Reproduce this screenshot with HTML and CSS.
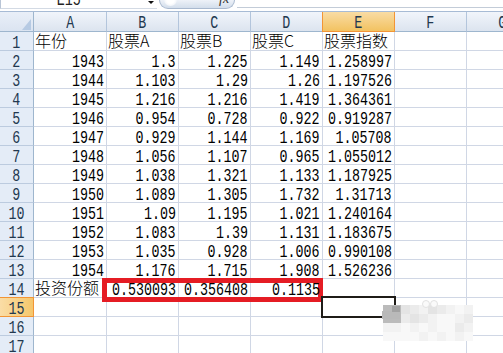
FILE: index.html
```html
<!DOCTYPE html>
<html lang="zh-CN">
<head>
  <meta charset="UTF-8">
  <title>投资份额</title>
  <link rel="stylesheet" href="styles.css">
</head>
<body>

  <div class="barra">
    <div class="nombre"><span>E15</span></div>
    <div class="desplegable"><i class="flecha"></i></div>
    <div class="boton-fx"><i class="brillo"></i><span class="fx">fx</span></div>
    <div class="formula"></div>
  </div>

  <div class="hoja" id="hoja">
    <div class="marco-rojo"></div>
    <div class="seleccion"></div>
    <div class="marca" id="marca"></div>
    <div class="gris claro"></div>
    <div class="gris oscuro"></div>
    <div class="lazo"><i></i><i></i></div>
  </div>

  <script>
    // --- Datos de la hoja ---
    const columnas = ['A', 'B', 'C', 'D', 'E', 'F', 'G'];
    const filas = [
      ['年份', '股票A', '股票B', '股票C', '股票指数'],
      ['1943', '1.3', '1.225', '1.149', '1.258997'],
      ['1944', '1.103', '1.29', '1.26', '1.197526'],
      ['1945', '1.216', '1.216', '1.419', '1.364361'],
      ['1946', '0.954', '0.728', '0.922', '0.919287'],
      ['1947', '0.929', '1.144', '1.169', '1.05708'],
      ['1948', '1.056', '1.107', '0.965', '1.055012'],
      ['1949', '1.038', '1.321', '1.133', '1.187925'],
      ['1950', '1.089', '1.305', '1.732', '1.31713'],
      ['1951', '1.09', '1.195', '1.021', '1.240164'],
      ['1952', '1.083', '1.39', '1.131', '1.183675'],
      ['1953', '1.035', '0.928', '1.006', '0.990108'],
      ['1954', '1.176', '1.715', '1.908', '1.526236'],
      ['投资份额', '0.530093', '0.356408', '0.1135']
    ];
    const hoja = document.getElementById('hoja');

    function celda(clase, texto) {
      const d = document.createElement('div');
      d.className = clase;
      if (texto) {
        const s = document.createElement('span');
        s.textContent = texto;
        d.appendChild(s);
      }
      hoja.appendChild(d);
    }

    celda('esquina');
    columnas.forEach(c => celda('cabecera' + (c === 'E' ? ' activa' : ''), c));

    for (let i = 1; i <= 17; i++) {
      celda('numero' + (i === 15 ? ' activa' : ''), String(i));
      const datos = filas[i - 1] || [];
      columnas.forEach((c, j) => {
        const v = datos[j];
        if (v === undefined) celda('celda');
        else if (/^[\d.]+$/.test(v)) celda('celda num', v);
        else celda('celda texto', v);
      });
    }

    // --- Mosaico de la marca de agua ---
    const patron = [
      '0012312343',
      '0021234432',
      '3343434423',
      '4444343434'
    ];
    const marca = document.getElementById('marca');
    patron.join('').split('').forEach(t => {
      const p = document.createElement('i');
      p.className = 't' + t;
      marca.appendChild(p);
    });
  </script>

</body>
</html>
```

FILE: styles.css
```css
* {
  box-sizing: border-box;
}
html, body {
  margin: 0;
  overflow: hidden;
  background-color: #fff;
}
body {
  width: 503px;
  height: 353px;
  font-family: "Noto Sans CJK SC", sans-serif;
}

/* barra de fórmulas (cortada arriba) */
.barra {
  display: flex;
  height: 12px;
  border-bottom: 1px solid #a7bbd5;
  overflow: hidden;
}
.nombre {
  width: 144px;
  height: 9px;
  display: flex;
  justify-content: center;
  padding-right: 8px;
  border-left: 1px solid #b9c5d6;
  border-bottom: 1px solid #d3dae4;
  line-height: 13px;
  color: #222;
}
.nombre span {
  margin-top: -6px;
}
.desplegable {
  width: 13px;
  height: 9px;
  display: flex;
  justify-content: center;
  border-bottom: 1px solid #d3dae4;
}
.flecha {
  margin-top: 1px;
  width: 0;
  height: 0;
  border-left: 3px solid transparent;
  border-right: 3px solid transparent;
  border-top: 3px solid #111;
}
.boton-fx {
  position: relative;
  width: 76px;
  height: 9px;
  margin-left: 2px;
  border: 1px solid #a9b9cf;
  border-top: none;
  border-radius: 0 0 9px 9px;
  background: linear-gradient(#eef2f8, #d3deeb);
}
.brillo {
  position: absolute;
  left: 4px;
  top: -6px;
  width: 13px;
  height: 12px;
  border-radius: 50%;
  background: radial-gradient(#fff 40%, #e3e9f2);
}
.fx {
  position: absolute;
  left: 59px;
  top: -9px;
  font: italic 14px "Liberation Serif", serif;
  color: #333;
}
.formula {
  flex: 1;
  height: 8px;
  margin-left: 2px;
  border-bottom: 1px solid #c3ccd8;
}

/* hoja */
.hoja {
  position: relative;
  display: grid;
  grid-template-columns: 34px 73px repeat(6, 72px);
  grid-template-rows: 20px;
  grid-auto-rows: 19px;
  width: 539px;
}
.esquina {
  position: relative;
  background: linear-gradient(#e9eff8, #dbe4f1);
  border-right: 1px solid #9eb6ce;
  border-bottom: 1px solid #9eb6ce;
}
.esquina::after {
  content: '';
  position: absolute;
  right: 2px;
  bottom: 1px;
  border-left: 9px solid transparent;
  border-bottom: 11px solid #b6cae3;
}
.cabecera {
  display: flex;
  justify-content: center;
  padding-top: 5px;
  line-height: 13px;
  background: linear-gradient(#f1f5fb, #dce4ef);
  border-right: 1px solid #b3c5dc;
  border-bottom: 1px solid #9eb6ce;
  color: #22384f;
}
.numero {
  display: flex;
  justify-content: center;
  padding-top: 5px;
  line-height: 13px;
  background-color: #e4ecf7;
  border-right: 1px solid #9eb6ce;
  border-bottom: 1px solid #bccbdf;
  color: #22384f;
}
.cabecera.activa {
  background: linear-gradient(#f9dca4, #f2c261);
  border-color: #f29536;
  box-shadow: -1px 0 0 #f29536;
}
.numero.activa {
  background: linear-gradient(to right, #fadda6, #f5c76c);
  border-color: #f29536;
  box-shadow: 0 -1px 0 #f29536;
}
.celda {
  border-right: 1px solid #d0d7e5;
  border-bottom: 1px solid #d0d7e5;
  padding-top: 5px;
  line-height: 13px;
  color: #000;
  white-space: nowrap;
}
.num {
  display: flex;
  justify-content: flex-end;
  padding-right: 2px;
}
.texto {
  padding-top: 2px;
  padding-left: 1px;
  font-size: 16px;
  font-weight: 300;
}
.num span, .cabecera span, .numero span, .nombre span {
  display: inline-block;
  font-family: "Liberation Mono", monospace;
  font-size: 17.5px;
  transform: scaleX(.762);
}
.num span {
  transform-origin: right;
}

/* marcas encima de la hoja */
.marco-rojo {
  position: absolute;
  left: 102px;
  top: 266px;
  width: 221px;
  height: 24px;
  border: 5px solid #e51c24;
}
.seleccion {
  position: absolute;
  left: 321px;
  top: 284px;
  width: 75px;
  height: 22px;
  border: 2px solid #1f1c18;
}
.marca {
  position: absolute;
  left: 383px;
  top: 293px;
  display: grid;
  grid-template-columns: repeat(10, 9px);
  grid-auto-rows: 9px;
}
.t0 { background-color: #bbb; }
.t1 { background-color: #e4e4e4; }
.t2 { background-color: #ebebeb; }
.t3 { background-color: #f2f2f2; }
.t4 { background-color: #f8f8f8; }
.gris {
  position: absolute;
}
.gris.claro {
  left: 382px;
  top: 299px;
  width: 18px;
  height: 8px;
  background-color: #b9b9b9;
}
.gris.oscuro {
  left: 392px;
  top: 294px;
  width: 8px;
  height: 6px;
  background-color: #a2a2a2;
}
.lazo {
  position: absolute;
  left: 422px;
  top: 288px;
  display: flex;
}
.lazo i {
  width: 8px;
  height: 8px;
  border: 1px solid #e2e2e2;
  border-radius: 50%;
  background-color: #fafafa;
}
```
